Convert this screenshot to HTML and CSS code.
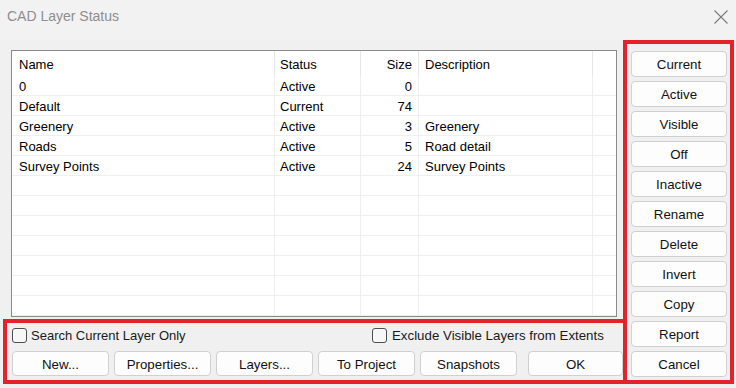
FILE: index.html
```html
<!DOCTYPE html>
<html>
<head>
<meta charset="utf-8">
<link rel="stylesheet" href="styles.css">
</head>
<body>
<div class="dialog">
  <div class="titlebar">
    <span class="title">CAD Layer Status</span>
    <svg class="close" width="14" height="14" viewBox="0 0 14 14"><path d="M0.5 0.5 L13.5 13.5 M13.5 0.5 L0.5 13.5" stroke="#7a7a7a" stroke-width="1.1" fill="none"/></svg>
  </div>
  <div class="main">
    <div class="leftcol">
      <div class="grid">
        <div class="row head">
          <div class="c name">Name</div>
          <div class="c status">Status</div>
          <div class="c size">Size</div>
          <div class="c desc">Description</div>
          <div class="c fill"></div>
        </div>
        <div class="row"><div class="c name">0</div><div class="c status">Active</div><div class="c size">0</div><div class="c desc"></div><div class="c fill"></div></div>
        <div class="row"><div class="c name">Default</div><div class="c status">Current</div><div class="c size">74</div><div class="c desc"></div><div class="c fill"></div></div>
        <div class="row"><div class="c name">Greenery</div><div class="c status">Active</div><div class="c size">3</div><div class="c desc">Greenery</div><div class="c fill"></div></div>
        <div class="row"><div class="c name">Roads</div><div class="c status">Active</div><div class="c size">5</div><div class="c desc">Road detail</div><div class="c fill"></div></div>
        <div class="row"><div class="c name">Survey Points</div><div class="c status">Active</div><div class="c size">24</div><div class="c desc">Survey Points</div><div class="c fill"></div></div>
        <div class="row"><div class="c name"></div><div class="c status"></div><div class="c size"></div><div class="c desc"></div><div class="c fill"></div></div>
        <div class="row"><div class="c name"></div><div class="c status"></div><div class="c size"></div><div class="c desc"></div><div class="c fill"></div></div>
        <div class="row"><div class="c name"></div><div class="c status"></div><div class="c size"></div><div class="c desc"></div><div class="c fill"></div></div>
        <div class="row"><div class="c name"></div><div class="c status"></div><div class="c size"></div><div class="c desc"></div><div class="c fill"></div></div>
        <div class="row"><div class="c name"></div><div class="c status"></div><div class="c size"></div><div class="c desc"></div><div class="c fill"></div></div>
        <div class="row"><div class="c name"></div><div class="c status"></div><div class="c size"></div><div class="c desc"></div><div class="c fill"></div></div>
        <div class="row"><div class="c name"></div><div class="c status"></div><div class="c size"></div><div class="c desc"></div><div class="c fill"></div></div>
      </div>
      <div class="bottom">
        <div class="checks">
          <label class="chk first"><span class="box"></span><span>Search Current Layer Only</span></label>
          <label class="chk second"><span class="box"></span><span>Exclude Visible Layers from Extents</span></label>
        </div>
        <div class="btnrow">
          <button class="btn wide">New...</button>
          <button class="btn wide">Properties...</button>
          <button class="btn wide">Layers...</button>
          <button class="btn wide">To Project</button>
          <button class="btn wide">Snapshots</button>
          <button class="btn ok">OK</button>
        </div>
      </div>
    </div>
    <div class="side">
      <button class="btn sbtn">Current</button>
      <button class="btn sbtn">Active</button>
      <button class="btn sbtn">Visible</button>
      <button class="btn sbtn">Off</button>
      <button class="btn sbtn">Inactive</button>
      <button class="btn sbtn">Rename</button>
      <button class="btn sbtn">Delete</button>
      <button class="btn sbtn">Invert</button>
      <button class="btn sbtn">Copy</button>
      <button class="btn sbtn">Report</button>
      <button class="btn sbtn">Cancel</button>
    </div>
  </div>
</div>
</body>
</html>
```

FILE: styles.css
```css
* { box-sizing: border-box; }
html, body { margin: 0; padding: 0; }
body {
  background: #f0f0f0;
  font-family: "Liberation Sans", Arial, sans-serif;
  font-size: 13px;
  color: #000;
  width: 736px;
  height: 388px;
  overflow: hidden;
}
.dialog { width: 736px; height: 388px; }
.titlebar {
  height: 40px;
  display: flex;
  align-items: flex-start;
  justify-content: space-between;
  padding: 8px 8px 0 7px;
  background: #f2f2f2;
}
.title {
  font-size: 14px;
  color: #8e8e8e;
  line-height: 16px;
}
.close { margin-top: 2px; }
.main {
  display: flex;
  padding-left: 3px;
  height: 344px;
}
.leftcol {
  width: 620px;
  display: flex;
  flex-direction: column;
}
.grid {
  margin: 10px 6px 0 8px;
  height: 267px;
  border: 1px solid #8a8a8a;
  background: #fff;
  overflow: hidden;
}
.row {
  display: grid;
  grid-template-columns: 262px 86px 58px 174px 24px;
  height: 20px;
  border-bottom: 1px solid #efefef;
}
.row.head { height: 25px; border-bottom: 0; }
.c {
  line-height: 19px;
  padding-top: 1px;
  white-space: nowrap;
  overflow: hidden;
  border-left: 1px solid #efefef;
}
.head .c { line-height: 25px; padding-top: 1px; border-left-color: #e6e6e6; }
.c.name { border-left: 0; padding-left: 7px; }
.c.status { padding-left: 5px; }
.c.size { text-align: right; padding-right: 6px; }
.c.desc { padding-left: 6px; }
.bottom {
  margin-top: 2px;
  height: 65px;
  border: 4px solid #e3222b;
  border-right: 0;
  padding: 4px 0 0 5px;
  display: flex;
  flex-direction: column;
}
.checks {
  display: flex;
  align-items: center;
  height: 17px;
}
.chk {
  display: flex;
  align-items: center;
  gap: 4px;
  font-size: 13px;
  color: #1a1a1a;
}
.chk.first { width: 360px; }
.chk.second { font-size: 13.3px; gap: 5px; }
.box {
  width: 15px;
  height: 15px;
  border: 1px solid #4d4d4d;
  border-radius: 3px;
  background: #f7f7f7;
}
.btnrow {
  display: flex;
  gap: 5px;
  margin-top: 7px;
}
.btn {
  font-family: "Liberation Sans", Arial, sans-serif;
  font-size: 13.3px;
  color: #111;
  background: #fdfdfd;
  border: 1px solid #d0d0d0;
  border-radius: 4px;
  padding: 1px 0 0 0;
  height: 25px;
}
.btn.wide { width: 97px; }
.btn.ok { width: 95px; margin-left: 6px; }
.side {
  width: 111px;
  height: 344px;
  border: 4px solid #e3222b;
  padding: 7px 0 0 4px;
  display: flex;
  flex-direction: column;
  gap: 4px;
}
.sbtn { width: 96px; height: 26px; padding-top: 0; }
```
